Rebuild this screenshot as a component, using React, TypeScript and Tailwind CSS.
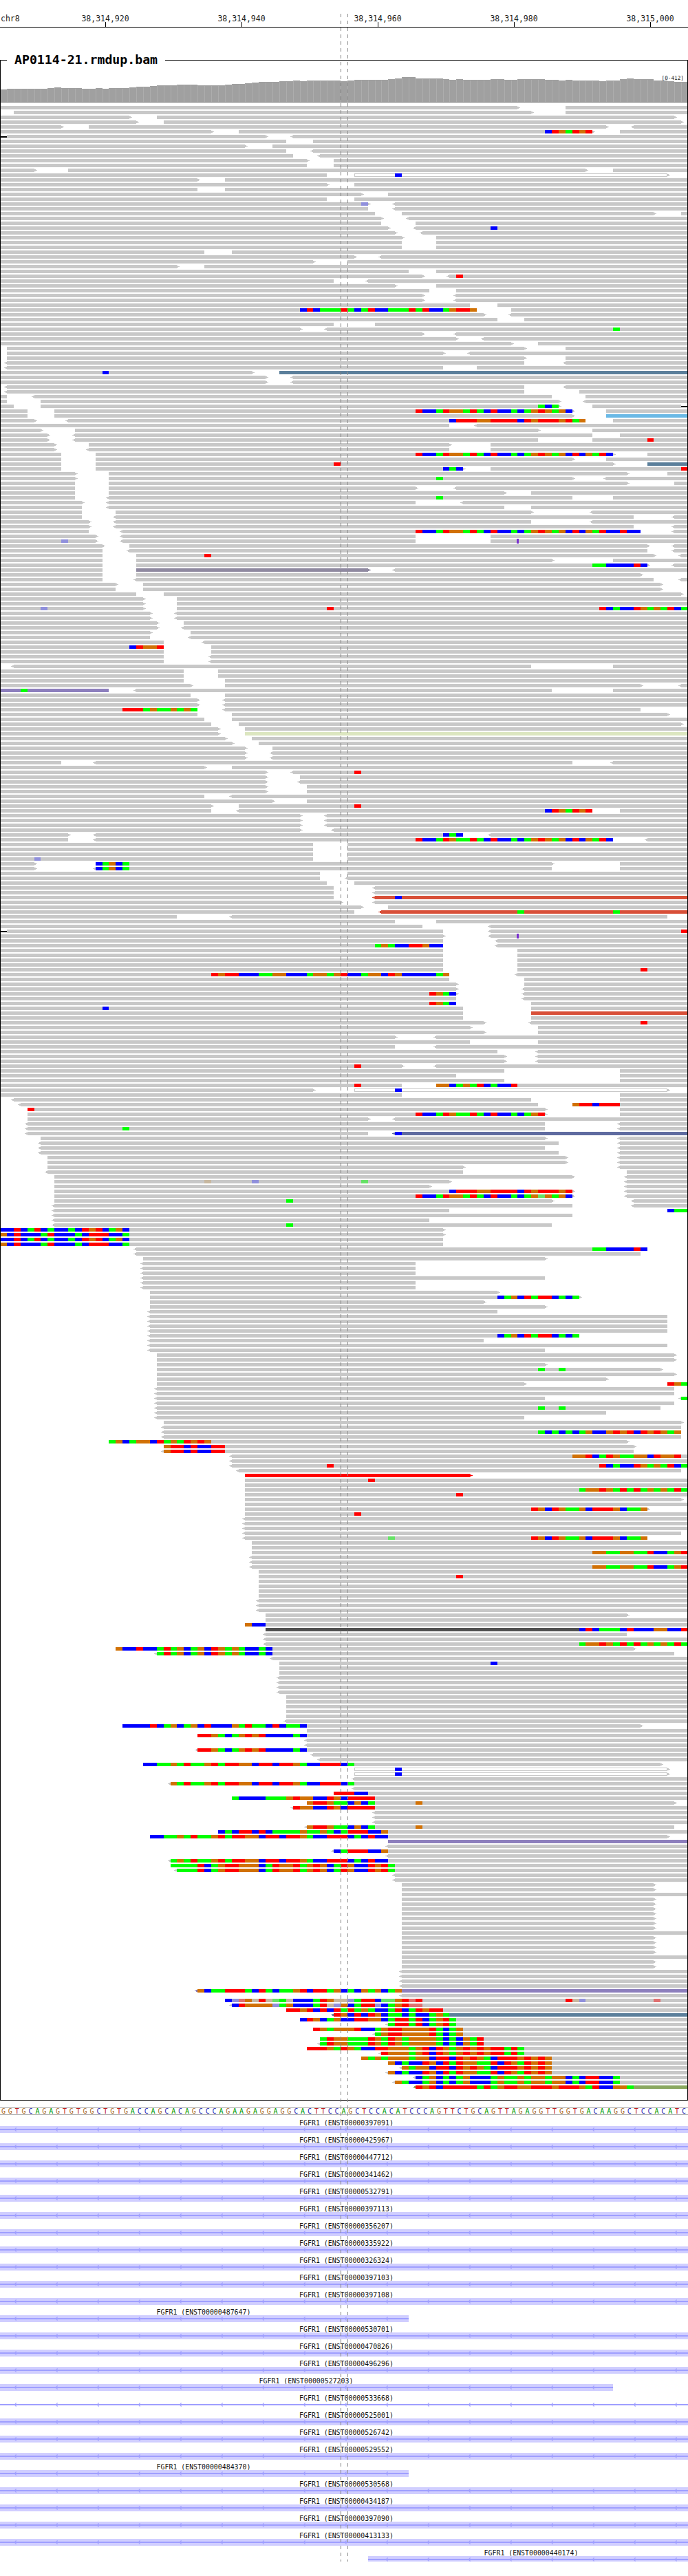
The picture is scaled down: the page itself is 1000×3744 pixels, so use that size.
const BP = 9.9;

// one line per pileup row: start-end, tip (< or >), ~fill, @pos+bases, ^insertion, !black stub
const PILEUP = `-76> 83-
2-78> 83-
-19> 23-99>
-20> 24-100>
-9> 13-89> 93-<
-31> 35-87>@80brogror 91-
!0 1-39> 43-<
-42 46-
-36> 40-
-42 46-<
-43 47-<
-45> 49-
-45 49-
-5> 10-86> 90-
-48 52-98>~w@58b
-29> 33-
-48> 52-
-29 33-
-53> 57-
-48 52-
-54>@53B 58-<
-54 58-<
-55 59-96> 100-
-56> 60-<
-56 61-
-57> 61-<@72b
-58> 62-<
-59> 64-
-59 64-
-59 64-
-30 34-
-52> 56-<
-46> 51-
-26> 30-
-60 64-
-62> 66-<@67r
-49 54-<
-58> 64-
-63 67-
-62> 67-<
-62> 67-<
-69 73-
-70@44brbgggrgbgrbbgggrgrbbgorro 75-
-71> 75-<
-73 77-
-49 55-
-44> 48-<@90g
-62> 67-<
-67> 71-<
-75> 79-
1-77> 83-
1-65> 69-<
1-77> 83-
1-77< 83-<
1-65< 70-
-37>@15b 41-~s
-39> 43-<
-39> 43-<
1-77< 83-<
1-77< 85-
-1 5-81< 86-
-1 6-82> 86-<
-2 6-82>@79gbg 87-100 !100
-4 8-84>@61rbbgroogrgbrbbgbgorogob 89-
-4 8-84> 89-~c
-5> 10-86<@66brrroorrrrbrorrrorgo 90-
-66 70-<
-6> 11-79> 87-
-7> 11-87< 91-
-7> 11-79< 87-@95r
-8> 13-66> 72-
-8> 13-66< 72-
-9 14-90>@61rbbgroogrgbrbbgbgorogobrbogrb 95-
-9 14-84> 89-
-9 14-90>@49r 95-~s
-9 14-68>@65bgb 72-@100r
-11> 16-92> 98-
-11> 16-84>@64g 89-<
-11 16-92> 99-
-11 16-61> 67-<
-11 16-74> 78-
-11 16-84<@64g 90-
-12> 16-61< 68-<
-12 16-74< 78-
-12 17-78> 87-<
-12 17-93< 99-<
-13> 17-78< 87-<
-13> 17-93< 99-<
-13 18-94<@61rbbgroogrgbrbbgbgorogobrbogrbbrbb 99-<
-14> 18-61< 72-
-14>@9B 18-61< 72-^76
-15> 19-95> 99-<
-15 19-95< 99-<
-15 20-96>@30r 100-<
-15 20-81> 90-
-15 20-95>@87ggbbbbrb 99-<
-15 20-54>~m 58-<
-15 20-94>
-15 20-96< 100-<
-17> 21-97>
-17 21-97>
-20 24-100>
-21> 26-
-21> 26-
-21>@6B 26-@48r@88rbgbbrogogrbg
-22> 26-<
-22> 26-<
-23> 27-
-23> 27-<
-22> 28-
-22 28-<
-24 30-<
-24@19broor 31-
-24 31-
-24 31-<
-24 31-<
2-78< 90-
-27 32-
-27 32-
-27 33-
-28> 33-94> 100-<
-16~p@3g 20-81< 90-
-28 33-
-29> 33-<
-29> 33-<
-29@18rrrgoggogog 33-94<
-29 34-98>
-30 34-
-31 35-100>
-32> 36-
-32> 36-~l
-33> 37-
-34> 38-
-36> 40-
-36> 40-<
-36> 40-<
-9 14-84< 90-<
-30> 34-
-39> 43-<@52r
-39> 44-
-39> 44-<
-39> 45-
-39> 45-
-30 34-<
-40> 45-
-31> 35-@52r
-31 35-87<@80brogror 91-
-44> 48-<
-44> 48-<
-44> 48-<
-44> 49-<
-10> 14-68<@65bgb 72-<
-10 14-90<@61rbbgroggrgbrbbgbgorogobrbogrb 95-<
-46 51-
-46 51-
-46 51-
-46@5B 51-
-5> 14-81>@14bgobg 91-
-5> 14-81<@14bgobg 91-
-47 51-
-47 51-<
-48 52-
-49 55-<
-49 55-<
-49 55-<~t@58b
-50> 55-<
-53> 57-
-52 56-<~t@76g@90g
-26 34-98<
-58 64-
-62 72-<
!0 1-65 72-<@100r
-65> 72-<^76
-65 73-<
-65@55gogbbrrobb 73-<
-65 76-
-65 76-
-65 76-
-65 76-
-65 76-@94r
-66@31rorrbbbggoobbbgoogorbbgoobrobbbbbgo 76-<
-66 77-
-67> 77-
-67> 77-<
-67>@63rogb 77-<
-67 77-<
-67@63rogb 78-
-68@15b 78-
-68 78-~t
-68 78-
-71> 78-<@94r
-69> 79-
-71> 79-
-58> 64-<
-69 79-
-58 64-<
-73 79-<
-74> 79-<
-74> 79-<
-59>@52r 64-<
-74 91-
-67 91-
-74 91-
-59@52r 64-@64oobgogrbgbbr
-46> 52-98>~w@58b
-59 91-
2-78< 91-
3-79< 84-@84orrbrrr
4-80>@4r 91-
4-80>@61rbbgroggrgbrbbgbgor 91-
4-54> 58-<
4-80< 91-<
4-80<@18g 91-<
4-54< 58-<~n@58b
6-80> 91-<
6-82< 91-<
6-80< 91-<
6-82< 91-<
7-83> 91-<
7-83> 91-<
7-68> 91-<
7-68< 92-
8-84> 92-<
8-66>@30O@37B@53G 92-<
8-63> 92-<
8-84>@66brrroorrrrbrorrror 92-<
8-84>@61rbbgroogrgbrbbgbgoGogob 92-<
8-81>@42g 93-<
8-84< 93-<
8-66< 98-@98bgg
8-84<
8-63<
8-81<@42g
-65>@0bbrbgrbgbbgbrorbgob
-65>@0obrbbbgrbbbgbrrrbbg
-65@0bbrbgrbgbbgbrorbgob
-65@0obrbbbgrbbbgbrrrbbg
20-95<@87ggbbbbrb
20-94<
21-80>
21-61<
21-61<
21-61<
21-80<
21-61<
21-61<
22-73>
22-85>@73bgobrgrrbgbg
22-71>
22-80>
22-73<
22-98<
22-98<
22-98<
22-98<
22-85<@73bgobrgrrbgbg
22-71<
22-98<
22-80<
23-99>
23-99>
23-80>
23-97>@79g@82g
23-99>
23-89>
23-77> 98-@98rog
23-99<
23-99<
23-80< 100-<@100g
23-99<
23-97<@79g@82g
23-89<
23-77<
24-100>
24-100<
24-100<@79gbgbgbgobbororbrorogo
24-100<
16-92>@16gobgoobrgogroro
24-93>@24orrbrbbrr
24-93<@24orrbrbbrr
34-<@84oorbgroggoobroor
34-<
34-<@48r@88rbgbbrogogrbg
35-100<
36-69>~r
36-@54r
36-
36-@85goorogrgrgogogrg
36-@67r
36-100>
36-
36-95>@78robroggobrrrobggo
36-@52r
36-<
36-<
36-<
36-100<
36-95<@57G@78robroggobrrrobggo
37-
37-
37-@87ooggooggrbbgor
37-<
37-<
37-<@87ooggooggrbbgor
38-
38-@67r
38-
38-
38-
38-
38-<
38-<
38-<
39-92>
39-
36-@36obb
39-~d@85brbgggbrbbboobbr
39-92<
39-<
39-<@85goorogrgrgogogrg
17-93>@17obbrbbgrgobgobrogogbbgb
23-99<@23grgobgobrogogbbgb
40-<
41-@72b
41-
41-
41-<
41-<
41-<
41-<
42-
42-
42-
42-
42-
42-<
18-94>@18bbbbrbgobgobrbbbogrggbrbggb
45-
29-@29rrogbgororbbbbgb
45-<
45-<
29-<@29rrogbgororbbbbgb
46-<
47-<
21-97>@21bbggogrggorgrroobrrbrrogbbrrrbg
52-98>~w@58b
52-98>~w@58b
52-<
25-<@25ogrggorgrroobrrbrrogbbrrrbg
52-<
49-@49rrrbb
34-@34gbbbbgggoroobbrobrrrr
45-99>@45orroggbobg@61o
43-<@43roobbrobrrrr
55-<
55-<
55-<
45-99<@45orroggbobg@61o
32-@32bgbrrbrbggggoggogbgrrrbbo
22-98>@22bbggogrggorgrroobrrbrrogbbrrrbgbrbb
57-~p
57-<
49-<@49bgrrrbbo
57-<
25-<@25gogrggorgrroobrrbrrogbbrrrbgbrbb
25-@25ggggrbgorrooobgroorgorobgrobbrorg
26-<@26gggrbgorrooobgroorgorobgrobbrorg
58-<
58-<
59-96>
59-96>
59-
59-96>
59-96>
59-96>
59-96>
59-96>
59-96>
59-96>
59-
59-96>
59-96>
59-96>
59-96>
59-
59-96>
59-96>
59-<
59-<
59-<
59-<
29-<~p@29obggrrrgbrgbggorbrrgobgbogobgo
59-<
33-@33bBRoOrOGgObbbgroOOBgrrbGGorRr@83r@84O@85B@96R
34-<@34brooooBgobbbgrOBobgrrBbgorRR
42-@42rrorbrbrgrgogbbgrbgrorr
49-<~s@49robrbrobggbgbbgog
44-@44brobgobbrroobgrrgrbgorg
57-<@57grrgrbgorg
46-@46rogooorbbgorroooorgbgo
55-<@55gorroooorgbgo
47-@47groogggrogrogoooogbgbogr
47-<@47groogggrogrogoooogbgbogr
45-@45rrrogrogbbrrooogorbrogororo@72rrgrg
56-<@56rooogorbrogororo@72rrgrg
53-@53ogogooogoobrrbrorogbrrrororo
57-@57obgbbrobrgrooggrbrogroro
59-<@59ogoobrrbrorogbrrrororo
57-<@57obgbbrobrgrooggrbrogroro
61-<@61bgobgbgobbbgoggogoogoobgbrrbbg
58-<@58ogbbgobgbgobbbgoggogoogoobgbrrbbg
61-<~o@61rorbrrrrrgrgorroorrrorrrogrbboog`;

const BASE_FILL: Record<string, string> = {
  b: "#0000ff",
  g: "#00ff00",
  r: "#ff0000",
  o: "#d17105",
  B: "#9090dc",
  G: "#66e266",
  R: "#e07070",
  O: "#c8b8a0",
};

const READ_FILL: Record<string, string> = {
  s: "#5b7f9b",
  c: "#6ab9e6",
  m: "#8f89a0",
  p: "#8d7fbd",
  l: "#dce6c0",
  t: "#d84f38",
  n: "#5f6ba0",
  r: "#ff0000",
  d: "#505050",
  o: "#8aa860",
};

// top of each coverage bar as [y, number of bases]
const COVERAGE: [number, number][] = [
  [130, 1], [129, 6], [128, 1], [127, 1], [128, 3], [129, 2], [128, 1], [129, 1], [128, 3], [127, 1],
  [126, 2], [125, 1], [124, 3], [123, 3], [124, 4], [123, 1], [122, 2], [121, 1], [120, 1], [119, 3],
  [118, 2], [117, 1], [118, 1], [117, 5], [118, 1], [117, 1], [116, 5], [115, 1], [114, 1], [112, 2],
  [114, 4], [115, 1], [116, 1], [115, 1], [116, 4], [115, 2], [116, 2], [115, 4], [116, 2], [117, 1],
  [116, 1], [117, 4], [118, 1], [117, 2], [115, 1], [114, 1], [115, 3], [117, 2], [118, 1], [119, 2],
];

const SEQUENCE =
  "GGTGCAGAGTGTGGCTGTGACCAGCACAGCCCAGAAGAGGAGGCACTTCCAGCTCCACATCCCAGTTCTGCAGTTAGAGGTTGGTGACAAGGCTCCACATC";

const SEQ_COLOR: Record<string, string> = {
  A: "text-[#009a00]",
  C: "text-[#2a2ab4]",
  G: "text-[#aa6a28]",
  T: "text-[#c02020]",
};

const DEFAULT_LABEL = 503.5;

const GENES: { id: string; center?: number; start?: number; end?: number; lineOnly?: boolean; clip?: boolean }[] = [
  { id: "00000397091" },
  { id: "00000425967" },
  { id: "00000447712" },
  { id: "00000341462" },
  { id: "00000532791" },
  { id: "00000397113" },
  { id: "00000356207" },
  { id: "00000335922" },
  { id: "00000326324" },
  { id: "00000397103" },
  { id: "00000397108" },
  { id: "00000487647", center: 296, end: 594 },
  { id: "00000530701" },
  { id: "00000470826" },
  { id: "00000496296" },
  { id: "00000527203", center: 445, end: 891 },
  { id: "00000533668", lineOnly: true },
  { id: "00000525001" },
  { id: "00000526742" },
  { id: "00000529552" },
  { id: "00000484370", center: 296, end: 594 },
  { id: "00000530568" },
  { id: "00000434187" },
  { id: "00000397090" },
  { id: "00000413133" },
  { id: "00000440174", center: 772, start: 535, clip: true },
];

const xOf = (base: number) => Math.round(base * BP);

const Read = ({ token, y }: { token: string; y: number }) => {
  if (token.startsWith("!")) {
    const base = Number(token.slice(1));
    return <rect x={xOf(base)} y={y + 2} width={xOf(base + 1) - xOf(base)} height={2} fill="#000000" />;
  }

  const match = token.match(/^(\d*)-(\d*)([<>]?)(.*)$/);
  if (!match) return null;

  const start = xOf(match[1] === "" ? 0 : Number(match[1]));
  const end = xOf(match[2] === "" ? 101 : Number(match[2]));
  const tip = match[3];
  const marks = [...match[4].matchAll(/([~@^])([^~@^]+)/g)];
  const fillMark = marks.find((m) => m[1] === "~");
  const white = fillMark?.[2] === "w";
  const fill = fillMark && !white ? READ_FILL[fillMark[2]] : "#c8c8c8";

  return (
    <g>
      {white ? (
        <rect x={start + 0.5} y={y + 0.5} width={end - start - 1} height={4} fill="#ffffff" stroke="#c8c8c8" />
      ) : (
        <rect x={start} y={y} width={end - start} height={5} fill={fill} />
      )}
      {tip === ">" && (
        <>
          <rect x={end} y={y + 1} width={2} height={3} fill={fill} />
          <rect x={end + 2} y={y + 2} width={2} height={1} fill={fill} />
        </>
      )}
      {tip === "<" && (
        <>
          <rect x={start - 2} y={y + 1} width={2} height={3} fill={fill} />
          <rect x={start - 4} y={y + 2} width={2} height={1} fill={fill} />
        </>
      )}
      {marks
        .filter((m) => m[1] === "@")
        .map((m) => {
          const pos = parseInt(m[2], 10);
          const bases = m[2].replace(/^\d+/, "");
          return [...bases].map((base, i) => (
            <rect
              key={`${pos}-${i}`}
              x={xOf(pos + i)}
              y={y}
              width={xOf(pos + i + 1) - xOf(pos + i)}
              height={5}
              fill={BASE_FILL[base]}
            />
          ));
        })}
      {marks
        .filter((m) => m[1] === "^")
        .map((m) => (
          <rect key={m[2]} x={xOf(Number(m[2])) - 1} y={y - 1} width={3} height={7} fill="#7a2fd0" />
        ))}
    </g>
  );
};

const Coverage = () => {
  const bars: { x: number; w: number; top: number }[] = [];
  let base = 0;
  COVERAGE.forEach(([top, count]) => {
    for (let i = 0; i < count; i++) {
      bars.push({ x: xOf(base), w: xOf(base + 1) - xOf(base), top });
      base += 1;
    }
  });

  return (
    <svg className="block w-full h-[61px]" viewBox="1 88 998 61" shapeRendering="crispEdges">
      {bars.map((bar) => (
        <g key={bar.x}>
          <rect x={bar.x} y={bar.top} width={bar.w} height={148 - bar.top} fill="#a0a0a0" />
          <rect x={bar.x} y={bar.top + 1} width={1} height={147 - bar.top} fill="#adadad" />
        </g>
      ))}
      <rect x={0} y={148} width={1000} height={1} fill="#777777" />
    </svg>
  );
};

const Pileup = () => {
  const rows = PILEUP.split("\n");
  return (
    <svg className="block w-full h-[2903px]" viewBox="1 0 998 2903" shapeRendering="crispEdges">
      {rows.map((row, i) => (
        <g key={i}>
          {row.split(" ").map((token, j) => (
            <Read key={j} token={token} y={5 + 7 * i} />
          ))}
        </g>
      ))}
    </svg>
  );
};

const Gene = ({ gene }: { gene: (typeof GENES)[number] }) => {
  const start = gene.start ?? 0;
  const end = gene.end ?? 1000;
  const arrows: number[] = [];
  for (let x = 22; x < 1000; x += 60) {
    if (x > start && x < end) arrows.push(x);
  }

  return (
    <div className="h-[25px]">
      <div className="h-[15px] pt-[3px]">
        <div
          className="w-[140px] text-center text-[9.9px] leading-[15px] text-[#111111] whitespace-nowrap"
          style={{ marginLeft: (gene.center ?? DEFAULT_LABEL) - 70 }}
        >
          FGFR1 (ENST{gene.id})
        </div>
      </div>
      <div className={gene.clip ? "h-[8px] overflow-hidden" : "h-[10px] overflow-hidden"}>
        <svg className="block w-full h-[10px]" viewBox="0 0 1000 10">
          {!gene.lineOnly && (
            <rect x={start} y={0} width={end - start} height={10} fill="#d0ceff" shapeRendering="crispEdges" />
          )}
          <rect x={start} y={4} width={end - start} height={2} fill="#9f9fff" shapeRendering="crispEdges" />
          {arrows.map((x) => (
            <polyline key={x} points={`${x + 1.5},2 ${x - 1},5 ${x + 1.5},8`} fill="#9f9fff" stroke="#9f9fff" strokeWidth={0.6} />
          ))}
        </svg>
      </div>
    </div>
  );
};

const Ruler = () => (
  <div className="flex h-[40px] items-end border-b border-black overflow-hidden text-[11.5px] leading-[10px] text-[#222222]">
    <div className="w-[54px] shrink-0 pb-[7px] pl-[1px]">chr8</div>
    {["38,314,920", "38,314,940", "38,314,960", "38,314,980", "38,315,000"].map((label) => (
      <div key={label} className="flex w-[198px] shrink-0 flex-col items-center">
        <span>{label}</span>
        <span className="h-[7px] w-px bg-black" />
      </div>
    ))}
  </div>
);

export default function App() {
  return (
    <div className="relative h-[3744px] w-[1000px] overflow-hidden bg-white font-['DejaVu_Sans_Mono',monospace]">
      <Ruler />

      <div className="relative mt-[47px] h-[2966px] border border-black">
        <div className="absolute left-[9px] top-[-13px] bg-white px-[11px] text-[18.2px] font-bold leading-[24px] text-black">
          AP0114-21.rmdup.bam
        </div>
        <div className="absolute right-[5px] top-[20px] text-[7.7px] leading-[12px] text-[#222222]">[0-412]</div>
        <Coverage />
        <Pileup />
      </div>

      <div className="mt-[10px] flex h-[11px] items-center border-y border-[#a8a8a8] text-[10px] leading-[10px]">
        {[...SEQUENCE].map((letter, i) => (
          <span key={i} className={`w-[9.9px] shrink-0 text-center ${SEQ_COLOR[letter]}`}>
            {letter}
          </span>
        ))}
      </div>

      <div className="mt-[1px]">
        {GENES.map((gene) => (
          <Gene key={gene.id} gene={gene} />
        ))}
      </div>

      {/* center guide lines of the locus, drawn over every track */}
      <div className="absolute left-[495px] top-[20px] h-[3703px] w-px bg-[repeating-linear-gradient(to_bottom,#808080_0,#808080_5px,transparent_5px,transparent_10px)]" />
      <div className="absolute left-[505px] top-[20px] h-[3703px] w-px bg-[repeating-linear-gradient(to_bottom,#909090_0,#909090_5px,transparent_5px,transparent_10px)]" />
    </div>
  );
}
